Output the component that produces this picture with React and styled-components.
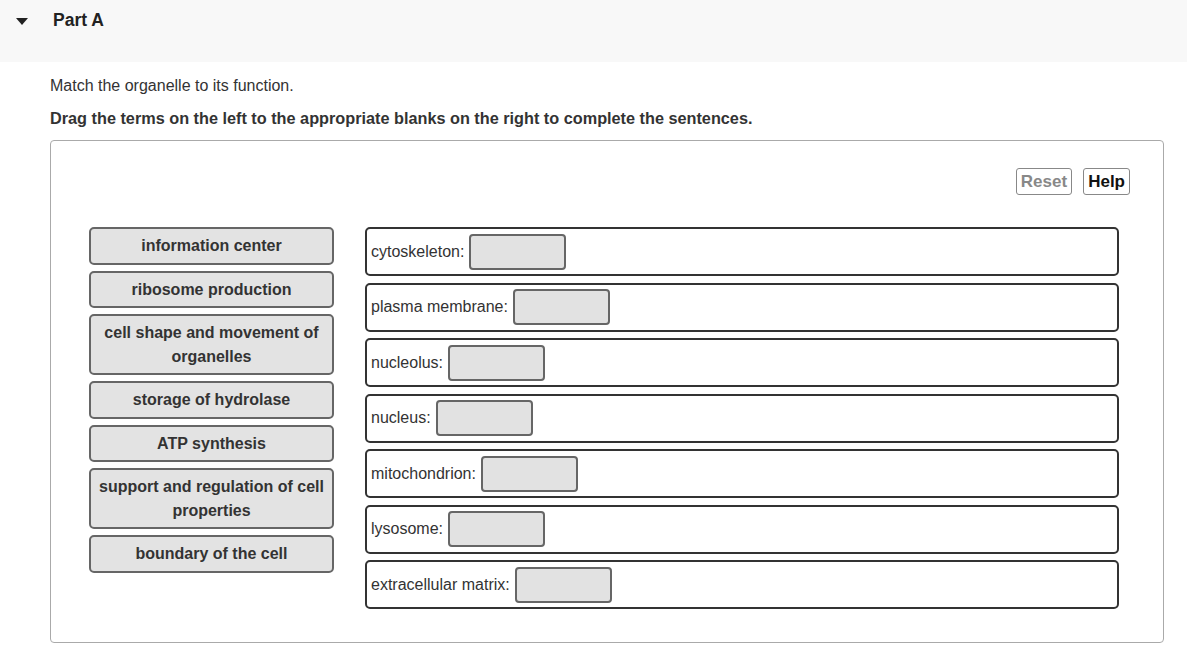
import React from "react";
import styled, { createGlobalStyle } from "styled-components";

const Global = createGlobalStyle`
  html, body { margin: 0; padding: 0; background: #fff; }
  body { font-family: "Liberation Sans", Arial, sans-serif; color: #333; }
`;

const Header = styled.div`
  height: 62px;
  background: #f8f8f8;
  display: flex;
  align-items: flex-start;
  padding-top: 10px;
  box-sizing: border-box;
`;

const Caret = styled.span`
  width: 0;
  height: 0;
  border-left: 6px solid transparent;
  border-right: 6px solid transparent;
  border-top: 7px solid #222;
  margin: 8px 0 0 16px;
`;

const Title = styled.h2`
  margin: 0 0 0 25px;
  font-size: 17.5px;
  font-weight: bold;
  color: #222;
  line-height: 21px;
`;

const Content = styled.div`
  padding: 14px 23px 0 50px;
`;

const Prompt = styled.p`
  margin: 0;
  font-size: 16px;
  line-height: 20px;
  color: #333;
`;

const Instruction = styled.p`
  margin: 12px 0 0;
  font-size: 16.25px;
  line-height: 20px;
  font-weight: bold;
  color: #333;
`;

const Panel = styled.div`
  margin-top: 12px;
  border: 1px solid #aaa;
  border-radius: 4px;
  padding: 27px 44px 33px 38px;
  display: flex;
  flex-direction: column;
`;

const Toolbar = styled.div`
  display: flex;
  justify-content: flex-end;
  gap: 11px;
  margin-right: -11px;
`;

const ToolButton = styled.button`
  font-family: "Liberation Sans", Arial, sans-serif;
  font-size: 17px;
  font-weight: bold;
  background: #fff;
  border: 1px solid #888;
  border-radius: 3px;
  height: 27px;
  padding: 0 4px;
  color: ${(p) => (p.$disabled ? "#888" : "#111")};
  cursor: pointer;
`;

const Body = styled.div`
  display: flex;
  gap: 31px;
  margin-top: 32px;
`;

const Terms = styled.div`
  width: 245px;
  flex-shrink: 0;
  display: flex;
  flex-direction: column;
  gap: 6px;
`;

const Term = styled.div`
  box-sizing: border-box;
  border: 2px solid #666;
  border-radius: 5px;
  background: #e3e3e3;
  padding: 5px 4px;
  line-height: 23.5px;
  font-size: 16px;
  font-weight: bold;
  color: #333;
  text-align: center;
`;

const Rows = styled.div`
  flex: 1;
  display: flex;
  flex-direction: column;
  gap: 6.5px;
`;

const Row = styled.div`
  box-sizing: border-box;
  height: 49px;
  border: 2px solid #333;
  border-radius: 5px;
  display: flex;
  align-items: center;
  padding-left: 4px;
  font-size: 16px;
  color: #333;
`;

const Blank = styled.span`
  box-sizing: border-box;
  width: 97px;
  height: 36px;
  margin-left: 5px;
  background: #e2e2e2;
  border: 2px solid #666;
  border-radius: 4px;
`;

const terms = [
  "information center",
  "ribosome production",
  "cell shape and movement of organelles",
  "storage of hydrolase",
  "ATP synthesis",
  "support and regulation of cell properties",
  "boundary of the cell",
];

const rows = [
  "cytoskeleton:",
  "plasma membrane:",
  "nucleolus:",
  "nucleus:",
  "mitochondrion:",
  "lysosome:",
  "extracellular matrix:",
];

export default function App() {
  return (
    <>
      <Global />
      <Header>
        <Caret />
        <Title>Part A</Title>
      </Header>
      <Content>
        <Prompt>Match the organelle to its function.</Prompt>
        <Instruction>
          Drag the terms on the left to the appropriate blanks on the right to complete the sentences.
        </Instruction>
        <Panel>
          <Toolbar>
            <ToolButton $disabled>Reset</ToolButton>
            <ToolButton>Help</ToolButton>
          </Toolbar>
          <Body>
            <Terms>
              {terms.map((t) => (
                <Term key={t}>{t}</Term>
              ))}
            </Terms>
            <Rows>
              {rows.map((r) => (
                <Row key={r}>
                  {r}
                  <Blank />
                </Row>
              ))}
            </Rows>
          </Body>
        </Panel>
      </Content>
    </>
  );
}
